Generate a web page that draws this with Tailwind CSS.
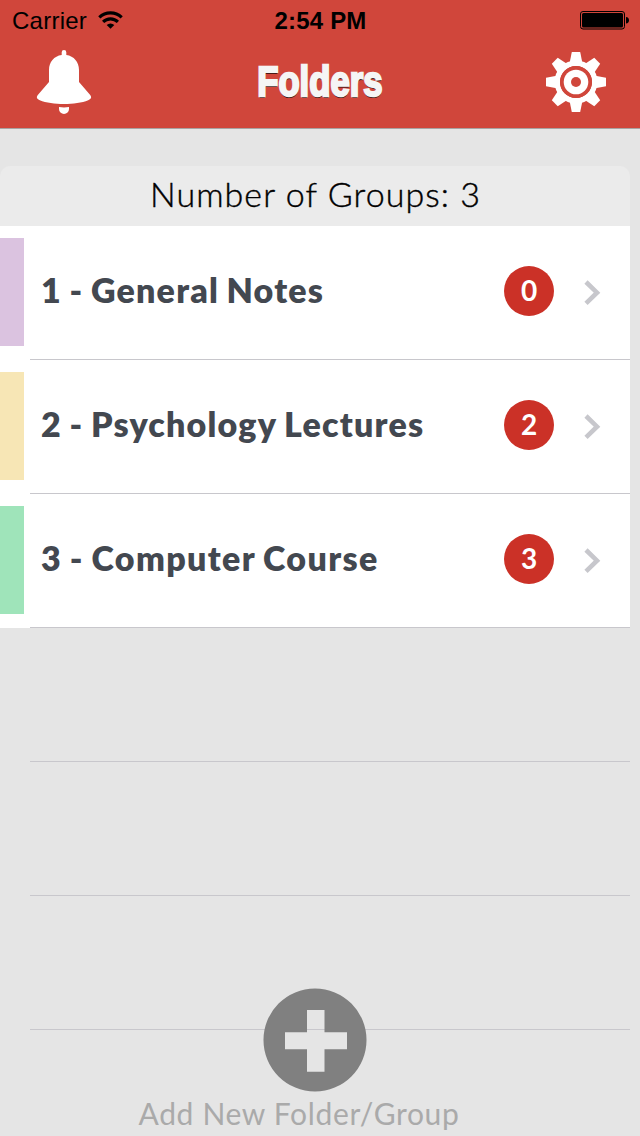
<!DOCTYPE html>
<html lang="en">

<head>
    <meta charset="UTF-8">
    <meta name="viewport" content="width=device-width, initial-scale=1.0">
    <title>Folders</title>
    <script src="https://cdn.jsdelivr.net/npm/@tailwindcss/browser@4"></script>
</head>

<body class="bg-[#e5e5e5] h-screen overflow-hidden relative font-['Lato',sans-serif]">

    <header class="bg-[#d0463b] h-[129px] border-b border-[#a9a3a2]">
        <!-- Status bar -->
        <div class="h-10 grid grid-cols-3 items-center pl-3 pr-[11px] font-['Liberation_Sans',sans-serif] text-2xl leading-[38px] text-black">
            <div class="flex items-center gap-[11px] whitespace-nowrap">
                <span class="tracking-[0.25px] pt-0.5">Carrier</span>
                <svg class="w-[25px] h-[18px]" viewBox="0 0 25 18">
                    <g fill="none" stroke="#000" stroke-width="3.1">
                        <path d="M1.3 6.4a16 16 0 0 1 22.4 0" />
                        <path d="M5.1 10.9a10.5 10.5 0 0 1 14.8 0" />
                    </g>
                    <path d="M8.7 14a5.4 5.4 0 0 1 7.6 0l-3.8 3.8z" />
                </svg>
            </div>
            <span class="text-center font-bold whitespace-nowrap tracking-[0.2px] pt-0.5">2:54 PM</span>
            <svg class="w-[50px] h-5 justify-self-end" viewBox="0 0 50 20">
                <rect x="1.5" y="1.5" width="44" height="17.5" rx="2.5" fill="none" stroke="#000" />
                <rect x="3" y="3" width="41" height="14.5" rx="1.5" />
                <path d="M47 7q3 .3 3 3.3t-3 3.2z" />
            </svg>
        </div>

        <!-- Navigation bar -->
        <div class="h-[88px] flex items-center justify-between px-[34px] -mt-0.5">
            <svg class="w-15 h-[68px]" viewBox="34 48 60 68" fill="#fff">
                <path d="M61.7 55v-2.7a2.3 2.3 0 0 1 4.6 0V55C74 56 79 62 79 70v12l11.2 13c2 2.500 .5 4.200-2 5.300C82 103 73 104 64 104s-18-1-24.200-3.700c-2.500-1.100-4-2.800-2-5.300L49 82V70c0-8 5-14 12.700-15z" />
                <path d="M59 107q5 .8 10 0v2a5 5 0 0 1-10 0z" />
            </svg>
            <h1 class="scale-x-[0.825] font-['Liberation_Sans',sans-serif] font-bold text-[42px] leading-none text-[#f5f5f5] [-webkit-text-stroke:2.4px_#f5f5f5] [text-shadow:0_2px_0_#2b0d0b]">Folders</h1>
            <svg class="w-15 h-15" viewBox="-30 -30 60 60" fill="#fff">
                <defs>
                    <path id="tooth" d="M-4.200-30h8.400L6.600-18H-6.600z" />
                </defs>
                <use href="#tooth" />
                <use href="#tooth" transform="rotate(45)" />
                <use href="#tooth" transform="rotate(90)" />
                <use href="#tooth" transform="rotate(135)" />
                <use href="#tooth" transform="rotate(180)" />
                <use href="#tooth" transform="rotate(225)" />
                <use href="#tooth" transform="rotate(270)" />
                <use href="#tooth" transform="rotate(315)" />
                <circle r="18.700" fill="none" stroke="#fff" stroke-width="5.400" />
                <circle r="16" fill="#d0463b" />
                <circle r="12.300" />
                <circle r="5" fill="#d0463b" />
            </svg>
        </div>
    </header>

    <main class="mt-[37px] w-[630px]">
        <h2 class="h-[60px] bg-[#ebebeb] rounded-t-[10px] pl-px text-center text-[34px] leading-[56px] font-light text-black tracking-[1.05px] [-webkit-text-stroke:0.4px_#000] whitespace-nowrap">Number of Groups: 3</h2>

        <ul class="text-[#434850]">
            <li class="h-[134px] bg-white flex">
                <div class="w-6 h-[108px] mt-3 bg-[#dbc3e0]"></div>
                <div class="ml-1.5 pl-[11px] pr-[29px] flex-1 flex items-center border-b border-[#c8c7cc]">
                    <span class="flex-1 text-[34px] font-extrabold tracking-[1.2px] [word-spacing:-1.5px] whitespace-nowrap pb-1.5">1 - General Notes</span>
                    <span class="w-[50px] h-[50px] mb-1 rounded-full bg-[#cb3127] text-white text-[28px] leading-[49px] font-bold text-center">0</span>
                    <svg class="ml-[30px] w-[17px] h-[26px]" viewBox="0 0 17 26"><path d="M2 2l11 10.700L2 23.400" fill="none" stroke="#c7c7cc" stroke-width="4.600" /></svg>
                </div>
            </li>
            <li class="h-[134px] bg-white flex">
                <div class="w-6 h-[108px] mt-3 bg-[#f7e6b5]"></div>
                <div class="ml-1.5 pl-[11px] pr-[29px] flex-1 flex items-center border-b border-[#c8c7cc]">
                    <span class="flex-1 text-[34px] font-extrabold tracking-[1.2px] [word-spacing:-1.5px] whitespace-nowrap pb-1.5">2 - Psychology Lectures</span>
                    <span class="w-[50px] h-[50px] mb-1 rounded-full bg-[#cb3127] text-white text-[28px] leading-[49px] font-bold text-center">2</span>
                    <svg class="ml-[30px] w-[17px] h-[26px]" viewBox="0 0 17 26"><path d="M2 2l11 10.700L2 23.400" fill="none" stroke="#c7c7cc" stroke-width="4.600" /></svg>
                </div>
            </li>
            <li class="h-[134px] bg-white flex">
                <div class="w-6 h-[108px] mt-3 bg-[#9fe4ba]"></div>
                <div class="ml-1.5 pl-[11px] pr-[29px] flex-1 flex items-center border-b border-[#c8c7cc]">
                    <span class="flex-1 text-[34px] font-extrabold tracking-[1.35px] [word-spacing:-1.5px] whitespace-nowrap pb-1.5">3 - Computer Course</span>
                    <span class="w-[50px] h-[50px] mb-1 rounded-full bg-[#cb3127] text-white text-[28px] leading-[49px] font-bold text-center">3</span>
                    <svg class="ml-[30px] w-[17px] h-[26px]" viewBox="0 0 17 26"><path d="M2 2l11 10.700L2 23.400" fill="none" stroke="#c7c7cc" stroke-width="4.600" /></svg>
                </div>
            </li>
            <!-- Empty rows -->
            <li class="h-[134px] ml-[30px] border-b border-[#c8c7cc]"></li>
            <li class="h-[134px] ml-[30px] border-b border-[#c8c7cc]"></li>
            <li class="h-[134px] ml-[30px] border-b border-[#c8c7cc]"></li>
        </ul>
    </main>

    <!-- Floating add button -->
    <button class="absolute left-[138px] top-[988px] w-[322px] flex flex-col items-center text-[#aaaaaa]">
        <svg class="w-[104px] h-[104px] ml-[32px]" viewBox="0 0 104 104">
            <path fill="#808080" fill-rule="evenodd" d="M52 .5a51.500 51.500 0 1 0 0 103a51.500 51.500 0 1 0 0-103zM44 22h17.500v22.300H84v17H61.500v22.400H44V61.300H22v-17h22z" />
        </svg>
        <span class="text-[30px] leading-[42px] tracking-[0.65px] whitespace-nowrap">Add New Folder/Group</span>
    </button>

</body>

</html>
